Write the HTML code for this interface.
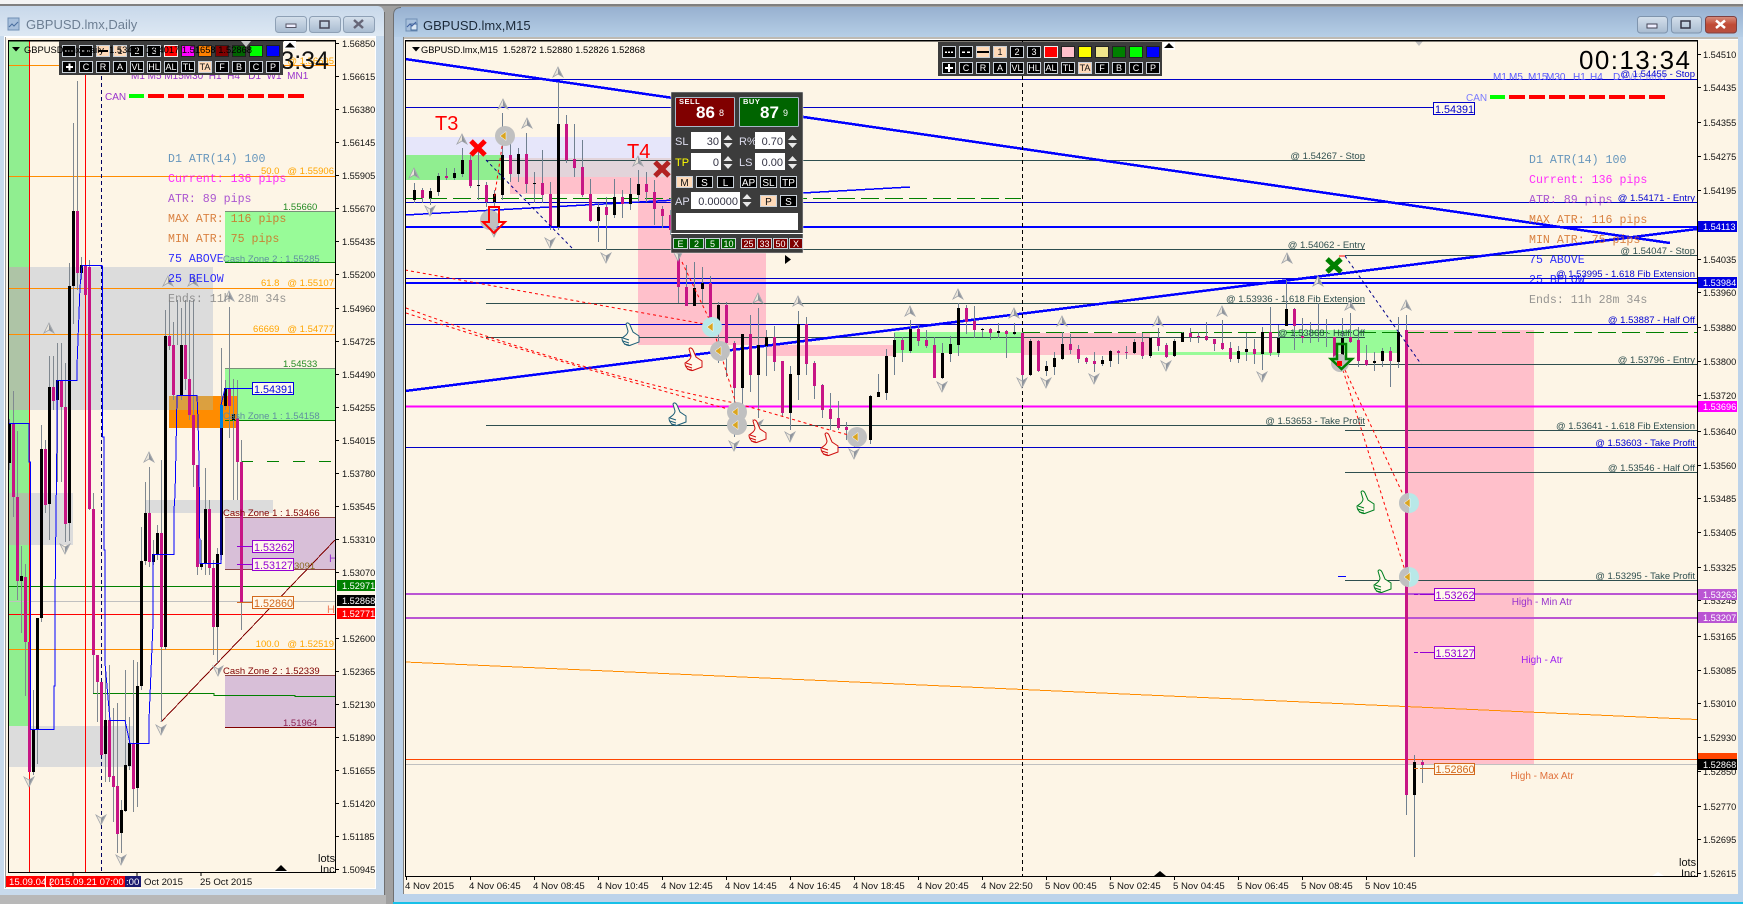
<!DOCTYPE html>
<html><head><meta charset="utf-8"><title>GBPUSD</title>
<style>
html,body{margin:0;padding:0;background:#f0f0f0;overflow:hidden}
svg{display:block}
text{font-family:"Liberation Sans",sans-serif;white-space:pre}
.c{shape-rendering:crispEdges}
.ax{font-size:9.2px;fill:#111}
.tg{font-size:9.2px;fill:#fff}
.l{font-size:9.5px;text-anchor:end}
.sl{fill:#2f4f4f}.bl{fill:#0000d0}
.x{font-size:9.6px;fill:#111}
.m{font-family:"Liberation Mono",monospace;font-size:11.6px;opacity:.82}
.b{fill:#000;stroke:#c8d0d8}
.p{fill:#ffdab9;stroke:#c8d0d8}
.t{font-size:9px;fill:#fff;text-anchor:middle}
.td{font-size:9px;fill:#111;text-anchor:middle}
.pl{font-size:11px;fill:#dde}
.in{fill:#fff}
.iv{font-size:11px;fill:#334;text-anchor:end}
.sp{fill:#e8e8e8}
.box{font-size:10.8px}
.tf{font-size:10px}
</style></head>
<body>
<svg xmlns="http://www.w3.org/2000/svg" width="1743" height="904" viewBox="0 0 1743 904">
<defs>
<linearGradient id="g1" x1="0" y1="0" x2="0" y2="1"><stop offset="0" stop-color="#c8d8ea"/><stop offset="1" stop-color="#dde8f3"/></linearGradient>
<linearGradient id="g2" x1="0" y1="0" x2="0" y2="1"><stop offset="0" stop-color="#97b0d0"/><stop offset="1" stop-color="#b6cee6"/></linearGradient>
<linearGradient id="gb" x1="0" y1="0" x2="0" y2="1"><stop offset="0" stop-color="#d5e0ec"/><stop offset="1" stop-color="#a8bbd0"/></linearGradient>
<linearGradient id="gr" x1="0" y1="0" x2="0" y2="1"><stop offset="0" stop-color="#d89080"/><stop offset=".5" stop-color="#c04a35"/><stop offset="1" stop-color="#b85040"/></linearGradient>
<g id="fu"><path d="M0-5L5 5 0 2-5 5Z" fill="#ece6da" stroke="#a0a4aa" stroke-width=".8"/><path d="M0-4L4 4 0 2Z" fill="#8e949c"/></g>
<g id="fd"><path d="M0 5L5-5 0-2-5-5Z" fill="#ece6da" stroke="#a0a4aa" stroke-width=".8"/><path d="M0 4L4-4 0-2Z" fill="#8e949c"/></g>
<path id="tri" d="M-5 0L1-4.500V4.500Z" fill="#daa520" stroke="#fff" stroke-width=".5"/>
<g id="th" fill="#fff8ea" stroke-width="1"><path d="M-8 3C-5 1-2-1-2-4L-4-11C-3-13-1-12 0-10L3-3 9 1V7L1 10C-3 12-8 8-8 3Z"/><path d="M-7 3L-1 5M-7 6L-1 8M-6 9L-1 10" fill="none"/></g>
</defs>

<!-- desktop -->
<rect width="1743" height="904" fill="#a0a0a0"/>
<rect width="1743" height="4" fill="#f4f4f4"/>
<rect y="4" width="1743" height="2" fill="#808080"/>

<!-- LEFT WINDOW -->
<path d="M0 6H376Q384 6 384 14V895H0Z" fill="#c8daec"/>
<path d="M0 6H376Q384 6 384 14V36H0Z" fill="url(#g1)"/>
<path d="M384.500 12V895" stroke="#707070"/>
<rect y="895" width="386" height="9" fill="#b8b8b8"/>
<rect x="4" y="36" width="372" height="853" fill="#fff"/>
<rect x="6" y="38" width="369" height="850" fill="#fdf5e6"/>
<path d="M5.500 37V888" stroke="#999"/>
<g fill="#a8c0dc" stroke="#6f8fb5"><rect x="8" y="18" width="11" height="12"/></g>
<path d="M9 27l3-3 2 2 4-4" stroke="#4a6f9f" fill="none"/>
<text x="26" y="29" font-size="13" fill="#6d7f93">GBPUSD.lmx,Daily</text>
<g stroke="#8ea0b5" fill="url(#gb)"><rect x="275.500" y="16.500" width="31" height="16" rx="3"/><rect x="309.500" y="16.500" width="31" height="16" rx="3"/><rect x="343.500" y="16.500" width="31" height="16" rx="3"/></g>
<rect x="286" y="24" width="10" height="3.500" fill="#eef" stroke="#556"/>
<rect x="320" y="21" width="9" height="7" fill="none" stroke="#445" stroke-width="1.500"/>
<path d="M354 20l9 8M363 20l-9 8" stroke="#667" stroke-width="2.500"/>

<!-- left chart rects -->
<g class="c">
<rect x="9" y="41" width="21" height="689" fill="#90ee90"/>
<rect x="9" y="267" width="204" height="143" fill="#dcdcdc"/>
<rect x="9" y="267" width="21" height="143" fill="#aec4a6"/>
<rect x="9" y="493" width="64" height="52" fill="#dcdcdc"/>
<rect x="9" y="493" width="21" height="52" fill="#aec4a6"/>
<rect x="145" y="500" width="128" height="13" fill="#dcdcdc"/>
<rect x="9" y="726" width="124" height="41" fill="#dcdcdc"/>
<rect x="225" y="211" width="110" height="52" fill="#98fb98"/>
<rect x="225" y="368" width="110" height="52" fill="#98fb98"/>
<rect x="225" y="517" width="110" height="52" fill="#d8bfd8"/>
<rect x="225" y="675" width="110" height="52" fill="#d8bfd8"/>
<rect x="169" y="396" width="68" height="32" fill="#ff8c00"/>
<rect x="169" y="396" width="44" height="14" fill="#dba040"/>
<path d="M225 211.500H335M225 368.500H335" stroke="#789078"/>
<path d="M225 262.500H335M225 420.500H335" stroke="#008000"/>
<path d="M225 517.500H335M225 569.500H335M225 675.500H335" stroke="#8b4444"/>
<path d="M225 727.500H335" stroke="#800000"/>
<path d="M9 65.500H335M9 176.500H335M9 288.500H335M9 334.500H335M9 649.500H335" stroke="#ff8c00"/>
<path d="M9 586.500H335M93 693.500H214V695.500H295V696.500H335" stroke="#008000" fill="none"/>
<path d="M241 461.500H332" stroke="#008000" stroke-dasharray="12 14"/>
<path d="M9 601.500H335" stroke="#c0c0c0"/>
<path d="M9 614.500H335" stroke="#f00"/>
<path d="M29.500 41V872M85.500 75V872" stroke="#f00"/>
<path d="M101.500 41V872" stroke="#000060" stroke-dasharray="4 3"/>
<path d="M161 722L335 540" stroke="#800000" fill="none"/>
</g>
<!-- left candles -->
<g class="c" fill="none">
<path stroke="#808890" d="M9.500 419V470M13.500 391V517M17.500 431V600M21.500 546V633M25.500 564V696M29.500 642V772M33.500 690V775M37.500 618V764M41.500 425V622M45.500 440V513M49.500 356V540M53.500 356V410M57.500 343V482M61.500 343V482M65.500 363V542M69.500 263V541M73.500 123V324M77.500 81V290M81.500 257V280M89.500 260V510M93.500 493V693M97.500 655V722M101.500 682V755M105.500 667V782M109.500 665V782M113.500 708V822M117.500 703V853M121.500 800V853M125.500 670V812M129.500 717V770M133.500 660V812M137.500 662V807M141.500 527V690M145.500 482V565M149.500 467V567M153.500 540V565M157.500 525V560M161.500 460V722M165.500 310V650M169.500 300V350M173.500 322V400M177.500 300V345M181.500 308V400M185.500 300V390M189.500 300V420M193.500 300V487M197.500 465V575M201.500 540V570M205.500 468V575M209.500 500V575M213.500 560V655M217.500 548V663M221.500 348V560M225.500 380V410M229.500 307V438M233.500 379V500M237.500 380V500M241.500 440V630"/>
<path stroke="#c71585" stroke-width="3" d="M13.500 423V497M17.500 497V581M25.500 577V642M29.500 642V772M45.500 449V505M53.500 387V401M61.500 380V407M65.500 407V524M77.500 211V273M85.500 265V295M89.500 267V509M93.500 509V655M97.500 655V682M101.500 682V755M109.500 720V777M113.500 776V787M117.500 786V834M133.500 743V789M149.500 513V562M161.500 533V647M169.500 336V346M173.500 345V395M185.500 345V379M189.500 379V415M193.500 415V465M197.500 465V567M209.500 509V568M213.500 568V627M229.500 388V406M237.500 418V462M241.500 462V602"/>
<path stroke="#000" stroke-width="3" d="M9.500 423V463M21.500 576V581M33.500 729V772M37.500 618V729M41.500 449V618M49.500 387V504M57.500 380V400M69.500 286V523M73.500 211V286M81.500 265V273M105.500 720V754M121.500 810V833M125.500 765V811M129.500 743V766M137.500 686V788M141.500 561V686M145.500 513V561M153.500 554V562M157.500 533V554M165.500 336V647M181.500 345V395M201.500 563V567M205.500 509V563M217.500 554V627M221.500 405V555M225.500 388V406M233.500 414V420"/>
<path stroke="#0000ff" d="M9 423.500H29V462H30.500V729.500H54V686H55V600L57 433V380.500H77V366L80 287 82 265.500H101V266H102.500V437H104V550H105V663L110 720.500H125L130 743.500H149V720L153 623V554.500H174V510L175 495 176 450 177 395.500H197L198 420 199 460 200 563.500H221V405L225 388.500H250"/>
<path stroke="#0080e0" stroke-width="3" d="M221.500 405V428"/>
</g>
<g>
<use href="#fu" x="49" y="328"/><use href="#fu" x="149" y="457"/>
<use href="#fu" x="168" y="281"/><use href="#fu" x="193" y="281"/><use href="#fu" x="229" y="296"/>
<use href="#fd" x="65" y="549"/><use href="#fd" x="29" y="782"/><use href="#fd" x="101" y="820"/><use href="#fd" x="121" y="860"/><use href="#fd" x="161" y="730"/><use href="#fd" x="218" y="671"/>
</g>
<!-- left labels -->
<text x="131" y="79" class="tf" fill="#9932cc">M1 M5 M15M30  H1  H4   D1  W1  MN1</text>
<text x="105" y="100" font-size="10" fill="#9932cc">CAN</text>
<g class="c"><rect x="129" y="94" width="15" height="4" fill="#0f0"/><path d="M148 96H164M168 96H184M188 96H204M208 96H224M228 96H244M248 96H264M268 96H284M288 96H304" stroke="#f00" stroke-width="4"/></g>
<text x="168" y="162" class="m" fill="#4682b4">D1 ATR(14) 100</text>
<text x="168" y="182" class="m" fill="#ff00ff">Current: 136 pips</text>
<text x="168" y="202" class="m" fill="#9932cc">ATR: 89 pips</text>
<text x="168" y="222" class="m" fill="#d2691e">MAX ATR: 116 pips</text>
<text x="168" y="242" class="m" fill="#d2691e">MIN ATR: 75 pips</text>
<text x="168" y="262" class="m" fill="#0000ff">75 ABOVE</text>
<text x="168" y="282" class="m" fill="#0000ff">25 BELOW</text>
<text x="168" y="302" class="m" fill="#808080">Ends: 11h 28m 34s</text>
<g class="l" fill="#ffa500">
<text x="334" y="64">@ 1.56695</text>
<text x="334" y="174">50.0   @ 1.55906</text>
<text x="334" y="286">61.8   @ 1.55107</text>
<text x="334" y="332">66669   @ 1.54777</text>
<text x="334" y="647">100.0   @ 1.52519</text>
</g>
<g font-size="9.500">
<text x="283" y="210" fill="#228b22">1.55660</text>
<text x="283" y="367" fill="#228b22">1.54533</text>
<text x="223" y="262" fill="#5f8f9f">Cash Zone 2 : 1.55285</text>
<text x="223" y="419" fill="#5f8f9f">Cash Zone 1 : 1.54158</text>
<text x="223" y="516" fill="#800000">Cash Zone 1 : 1.53466</text>
<text x="223" y="674" fill="#800000">Cash Zone 2 : 1.52339</text>
<text x="283" y="726" fill="#8b2252">1.51964</text>
<text x="294" y="569" fill="#8b6b22">3091</text>
</g>
<text x="329" y="562" font-size="11" fill="#9932cc">H</text>
<text x="327" y="613" font-size="11" fill="#f08060">H</text>
<g class="c" fill="#fff8ea">
<path d="M237 388.500H253" stroke="#00f"/><path d="M237 546.500H253M237 564.500H253" stroke="#9400d3"/><path d="M237 602.500H253" stroke="#d2691e"/>
<rect x="252.500" y="382.500" width="41" height="12" stroke="#0000e0"/>
<rect x="252.500" y="540.500" width="41" height="12" stroke="#9400d3"/>
<rect x="252.500" y="558.500" width="41" height="12" stroke="#9400d3"/>
<rect x="252.500" y="596.500" width="41" height="12" stroke="#d2691e"/>
</g>
<text x="254" y="393" class="box" fill="#0000e0">1.54391</text>
<text x="254" y="551" class="box" fill="#9400d3">1.53262</text>
<text x="254" y="569" class="box" fill="#9400d3">1.53127</text>
<text x="254" y="607" class="box" fill="#d2691e">1.52860</text>
<text x="318" y="862" font-size="11" fill="#111">lots</text><text x="320" y="873" font-size="11" fill="#111">Inc</text>
<path d="M275 871l6-6 6 6Z" fill="#000"/><rect x="276" y="871" width="12" height="1" fill="#fff"/>

<!-- left clock, axis and frame -->
<text x="329" y="69" font-size="25" text-anchor="end" fill="#111">00:13:34</text>
<path class="c" d="M8.500 41V872.500H335.500V41ZM8 40.500H336" fill="none" stroke="#000"/>
<rect x="336" y="38" width="39" height="3" fill="#fdf5e6"/>
<path class="c" stroke="#000" d="M336 43.500h3M336 76.500h3M336 109.500h3M336 142.500h3M336 175.500h3M336 208.500h3M336 241.500h3M336 274.500h3M336 308.500h3M336 341.500h3M336 374.500h3M336 407.500h3M336 440.500h3M336 473.500h3M336 506.500h3M336 539.500h3M336 572.500h3M336 638.500h3M336 671.500h3M336 704.500h3M336 737.500h3M336 770.500h3M336 803.500h3M336 836.500h3M336 869.500h3M73 873v3M137 873v3M201 873v3"/>
<g class="ax">
<text x="342" y="47">1.56850</text><text x="342" y="80">1.56615</text><text x="342" y="113">1.56380</text><text x="342" y="146">1.56145</text><text x="342" y="179">1.55905</text><text x="342" y="212">1.55670</text><text x="342" y="245">1.55435</text><text x="342" y="278">1.55200</text><text x="342" y="312">1.54960</text><text x="342" y="345">1.54725</text><text x="342" y="378">1.54490</text><text x="342" y="411">1.54255</text><text x="342" y="444">1.54015</text><text x="342" y="477">1.53780</text><text x="342" y="510">1.53545</text><text x="342" y="543">1.53310</text><text x="342" y="576">1.53070</text><text x="342" y="642">1.52600</text><text x="342" y="675">1.52365</text><text x="342" y="708">1.52130</text><text x="342" y="741">1.51890</text><text x="342" y="774">1.51655</text><text x="342" y="807">1.51420</text><text x="342" y="840">1.51185</text><text x="342" y="873">1.50945</text>
</g>
<g class="c"><rect x="337" y="580" width="38" height="11" fill="#008000"/><rect x="337" y="595" width="38" height="11" fill="#000"/><rect x="337" y="608" width="38" height="11" fill="#f00"/></g>
<text x="342" y="589" class="tg">1.52971</text><text x="342" y="604" class="tg">1.52868</text><text x="342" y="617" class="tg">1.52771</text>
<rect x="6" y="876" width="39" height="11" fill="#f00"/><rect x="46" y="876" width="79" height="11" fill="#f00"/><rect x="125" y="876" width="16" height="11" fill="#1a1a70"/>
<text x="9" y="885" font-size="9.600" fill="#fff">15.09.04 (</text><text x="49" y="885" font-size="9.600" fill="#fff">2015.09.21 07:00</text><text x="126" y="885" font-size="9.600" fill="#fff">:00</text>
<text x="144" y="885" class="x">Oct 2015</text><text x="200" y="885" class="x">25 Oct 2015</text>

<!-- left toolbar -->
<g transform="translate(58,41)">
<rect x="1" width="224" height="34" fill="#3c3c3c"/>
<g class="c">
<rect x="4.500" y="4.500" width="13" height="11" class="b"/><rect x="21.500" y="4.500" width="13" height="11" class="b"/><rect x="38.500" y="4.500" width="13" height="11" class="p"/><rect x="55.500" y="4.500" width="13" height="11" class="p"/><rect x="72.500" y="4.500" width="13" height="11" class="b"/><rect x="89.500" y="4.500" width="13" height="11" class="b"/>
<rect x="106.500" y="4.500" width="13" height="11" fill="#f00" stroke="#eee"/><rect x="123.500" y="4.500" width="13" height="11" fill="#f0f" stroke="#222"/><rect x="140.500" y="4.500" width="13" height="11" fill="#ff8000" stroke="#222"/><rect x="157.500" y="4.500" width="13" height="11" fill="#800000" stroke="#222"/><rect x="174.500" y="4.500" width="13" height="11" fill="#006400" stroke="#222"/><rect x="191.500" y="4.500" width="13" height="11" fill="#0f0" stroke="#222"/><rect x="208.500" y="4.500" width="13" height="11" fill="#00f" stroke="#222"/>
<rect x="4.500" y="20.500" width="13" height="11" class="b"/><rect x="21.500" y="20.500" width="13" height="11" class="b"/><rect x="38.500" y="20.500" width="13" height="11" class="b"/><rect x="55.500" y="20.500" width="13" height="11" class="b"/><rect x="72.500" y="20.500" width="13" height="11" class="b"/><rect x="89.500" y="20.500" width="13" height="11" class="b"/><rect x="106.500" y="20.500" width="13" height="11" class="b"/><rect x="123.500" y="20.500" width="13" height="11" class="b"/><rect x="140.500" y="20.500" width="13" height="11" class="p"/><rect x="157.500" y="20.500" width="13" height="11" class="b"/><rect x="174.500" y="20.500" width="13" height="11" class="b"/><rect x="191.500" y="20.500" width="13" height="11" class="b"/><rect x="208.500" y="20.500" width="13" height="11" class="b"/>
<path d="M7 10h2M10 10h2M13 10h2M24 10h3M29 10h3M40 10h10" stroke="#fff"/>
<path d="M40 10h10" stroke="#000" stroke-width="2"/>
<path d="M8 26h7M11.500 22.500v7" stroke="#fff" stroke-width="2"/>
</g>
<text x="62" y="13" class="td">1</text><text x="79" y="13" class="t">2</text><text x="96" y="13" class="t">3</text>
<text x="28" y="29" class="t">C</text><text x="45" y="29" class="t">R</text><text x="62" y="29" class="t">A</text><text x="79" y="29" class="t">VL</text><text x="96" y="29" class="t">HL</text><text x="113" y="29" class="t">AL</text><text x="130" y="29" class="t">TL</text><text x="147" y="29" class="td">TA</text><text x="164" y="29" class="t">F</text><text x="181" y="29" class="t">B</text><text x="198" y="29" class="t">C</text><text x="215" y="29" class="t">P</text>
</g>
<path d="M12 47h8l-4 4.500Z" fill="#000"/>
<text x="24" y="53" font-size="9.600" fill="#000" textLength="228" lengthAdjust="spacingAndGlyphs">GBPUSD.lmx,Daily  1.53483 1.54017 1.51658 1.52868</text>
<rect x="284" y="41" width="12" height="8" fill="#fff"/><path d="M285 47.500l5-5 5 5Z" fill="#000"/>
<path d="M241 41l5 6 5-6Z" fill="#c4c4c4"/>

<!-- RIGHT WINDOW -->
<path d="M393 904V15Q393 7 401 7H1743V904Z" fill="#bdd3ea"/>
<path d="M393 37V15Q393 7 401 7H1743V37Z" fill="url(#g2)"/>
<path d="M393.500 904V15Q393.500 7.500 401 7.500" fill="none" stroke="#707070"/>
<rect x="393" y="902" width="1350" height="2" fill="#18c0e8"/>
<rect x="403" y="37" width="1335" height="857" fill="#fdf5e6"/>
<path class="c" d="M403.500 37V894M403 38H1738" stroke="#808080"/>
<rect x="405" y="39" width="1333" height="1" fill="#fff"/>
<g fill="#a8c0dc" stroke="#6f8fb5"><rect x="406" y="19" width="11" height="12"/></g>
<rect x="411" y="24" width="6" height="6" fill="#dce8f4" stroke="#4a6f9f"/>
<path d="M407 27l3-3 2 2 4-4" stroke="#3f5f9f" fill="none"/>
<text x="423" y="30" font-size="13" fill="#1c2a3a">GBPUSD.lmx,M15</text>
<g stroke="#7f94ad" fill="url(#gb)"><rect x="1637.500" y="16.500" width="30" height="16.500" rx="3"/><rect x="1671.500" y="16.500" width="30" height="16.500" rx="3"/></g>
<rect x="1705.500" y="16.500" width="31" height="16.500" rx="3" fill="url(#gr)" stroke="#804040"/>
<rect x="1647" y="24" width="10" height="4" fill="#eef" stroke="#445"/>
<rect x="1681" y="21" width="9" height="7" fill="none" stroke="#334" stroke-width="1.500"/>
<path d="M1716 20.500l9 7.500M1725 20.500l-9 7.500" stroke="#fff" stroke-width="2.500"/>

<!-- main rects -->
<g class="c">
<rect x="405" y="137" width="266" height="21" fill="#e6e6fa"/>
<rect x="405" y="155" width="96" height="25" fill="#90ee90"/>
<rect x="510" y="158" width="161" height="19" fill="#e2d4da"/>
<rect x="510" y="177" width="161" height="17" fill="#ffc0cb"/>
<rect x="638" y="194" width="128" height="151" fill="#ffc0cb"/>
<rect x="767" y="345" width="127" height="11" fill="#ffc0cb"/>
<rect x="894" y="332" width="128" height="21" fill="#98fb98"/>
<rect x="1022" y="333" width="128" height="22" fill="#ffc0cb"/>
<rect x="1150" y="352" width="130" height="3" fill="#98fb98"/>
<rect x="1279" y="330" width="118" height="23" fill="#98fb98"/>
<rect x="1407" y="330" width="127" height="434" fill="#ffc0cb"/>
</g>
<!-- main lines -->
<g class="c" fill="none">
<path stroke="#0000c8" d="M405 79.500H1697M405 107.500H1423M405 202.500H1697M405 278.500H1697M405 324.500H1697M405 447.500H1697"/>
<path stroke="#2f4f4f" d="M486 160.500H1365M486 249.500H1365M1345 255.500H1697M486 303.500H1365M486 337.500H1365M1345 364.500H1697M486 425.500H1365M1345 430.500H1697M1345 472.500H1697M1345 580.500H1697"/>
<path stroke="#00f" stroke-width="2" d="M405 227H1697M405 283H1697"/>
<path stroke="#008000" d="M405 198.500H1021" stroke-dasharray="18 6"/>
<path stroke="#008000" d="M1022 332.500H1697" stroke-dasharray="18 6"/>
<path stroke="#f0f" stroke-width="2" d="M405 406.500H1697"/>
<path stroke="#ba55d3" stroke-width="2" d="M405 594H1697M405 618H1697"/>
<path stroke="#ff8c00" d="M405 662L1697 719.500"/>
<path stroke="#c0c0c0" d="M405 764.500H1697"/>
<path stroke="#ff4500" d="M405 759.500H1697"/>
<path stroke="#00f" stroke-width="2.500" d="M405 59L1670 243"/>
<path stroke="#00f" stroke-width="2.500" d="M405 391L1697 229"/>
<path stroke="#00f" stroke-width="1.500" d="M405 215L910 187"/>
<path stroke="#00f" d="M1338 576.500h8"/>
<path stroke="#000" d="M1022.500 41V876" stroke-dasharray="4 3"/>
</g>
<!-- main candles -->
<g class="c" fill="none">
<path stroke="#708090" d="M414.500 183V203M422.500 188V203M430.500 188V205M438.500 173V196M446.500 168V180M454.500 168V180M462.500 148V177M470.500 155V188M478.500 148V200M486.500 182V207M494.500 190V208M502.500 113V200M510.500 143V182M518.500 148V182M526.500 133V193M534.500 172V203M542.500 150V203M550.500 182V230M558.500 82V230M566.500 115V163M574.500 124V177M582.500 140V197M590.500 179V222M598.500 203V242M606.500 197V250M614.500 179V218M622.500 190V218M630.500 178V210M638.500 170V202M646.500 172V202M654.500 180V225M662.500 206V228M670.500 210V235M678.500 250V303M686.500 265V306M694.500 262V306M702.500 267V303M710.500 276V325M718.500 302V363M726.500 302V377M734.500 341V437M742.500 334V405M750.500 315V392M758.500 308V418M766.500 330V376M774.500 326V371M782.500 361V417M790.500 366V430M798.500 311V400M806.500 317V375M814.500 361V399M822.500 384V418M830.500 393V430M838.500 401V430M846.500 422V440M854.500 429V447M862.500 433V443M870.500 395V444M878.500 374V397M886.500 349V400M894.500 333V375M902.500 337V362M910.500 320V353M918.500 325V346M926.500 330V348M934.500 337V378M942.500 343V379M950.500 336V362M958.500 303V356M966.500 305V334M974.500 306V338M982.500 328V337M990.500 328V340M998.500 323V338M1006.500 330V358M1014.500 323V335M1022.500 332V387M1030.500 339V376M1038.500 340V372M1046.500 361V376M1054.500 352V375M1062.500 332V360M1070.500 334V354M1078.500 345V363M1086.500 357V364M1094.500 352V372M1102.500 356V366M1110.500 350V367M1118.500 350V364M1126.500 346V359M1134.500 339V354M1142.500 333V359M1150.500 337V358M1158.500 328V351M1166.500 343V358M1174.500 339V357M1182.500 332V342M1190.500 328V342M1198.500 332V343M1206.500 322V341M1214.500 339V351M1222.500 320V350M1230.500 342V362M1238.500 346V363M1246.500 333V361M1254.500 339V364M1262.500 327V370M1270.500 307V356M1278.500 325V357M1286.500 280V326M1294.500 308V350M1302.500 318V343M1310.500 322V343M1318.500 303V342M1326.500 319V347M1334.500 337V362M1342.500 318V365M1350.500 313V343M1358.500 327V367M1366.500 345V366M1374.500 352V371M1382.500 348V367M1390.500 347V387M1398.500 317V368M1406.500 315V815M1414.500 755V857M1422.500 760V783"/>
<path stroke="#c71585" stroke-width="3" d="M422.500 190V198M446.500 176V178M470.500 160V186M486.500 185V202M510.500 155V174M526.500 154V184M542.500 183V195M550.500 194V226M566.500 124V160M574.500 159V168M582.500 167V195M590.500 194V221M606.500 207V215M622.500 197V204M646.500 184V192M654.500 192V209M662.500 209V216M670.500 215V230M678.500 257V287M686.500 287V306M710.500 283V323M726.500 305V343M734.500 343V388M750.500 334V375M774.500 337V362M782.500 361V413M806.500 324V364M814.500 363V386M822.500 385V410M830.500 409V419M838.500 418V428M846.500 427V430M854.500 429V442M902.500 340V350M918.500 329V341M926.500 340V346M934.500 345V378M966.500 308V322M974.500 321V330M990.500 329V333M1006.500 331V334M1022.500 333V375M1038.500 341V371M1070.500 344V350M1078.500 349V359M1086.500 358V362M1094.500 361V364M1118.500 351V353M1126.500 352V353M1142.500 342V356M1158.500 338V346M1166.500 345V357M1190.500 333V337M1198.500 336V337M1206.500 336V340M1214.500 339V344M1222.500 343V349M1230.500 348V359M1254.500 349V354M1270.500 332V353M1294.500 309V326M1302.500 336V338M1334.500 337V360M1350.500 337V342M1358.500 340V361M1366.500 360V365M1390.500 351V361M1406.500 330V795M1422.500 762V765"/>
<path stroke="#000" stroke-width="3" d="M414.500 190V200M430.500 191V198M438.500 176V192M454.500 173V178M462.500 160V174M478.500 185V186M494.500 194V202M502.500 155V195M518.500 154V174M534.500 183V184M558.500 124V227M598.500 207V221M614.500 197V215M630.500 194V204M638.500 184V195M694.500 288V306M702.500 283V289M718.500 305V325M742.500 334V388M758.500 345V375M766.500 337V346M790.500 374V413M798.500 324V375M862.500 439V441M870.500 396V440M878.500 392V397M886.500 356V393M894.500 340V357M910.500 329V351M942.500 353V378M950.500 344V354M958.500 308V345M982.500 329V330M998.500 331V333M1014.500 332V334M1030.500 341V375M1046.500 366V371M1054.500 358V367M1062.500 344V359M1102.500 360V364M1110.500 351V361M1134.500 342V353M1150.500 338V356M1174.500 341V356M1182.500 333V342M1238.500 351V359M1246.500 349V352M1262.500 332V354M1278.500 338V353M1286.500 309V326M1342.500 338V363M1374.500 361V363M1382.500 351V361M1398.500 332V362M1414.500 762V795"/>
</g>
<!-- dashed diagonals -->
<g fill="none" stroke-dasharray="3 3">
<path stroke="#00008b" d="M486 160L572 248M1345 256L1421 364"/>
<path stroke="#f00" d="M405 270Q560 298 710 325"/>
<path stroke="#f00" d="M406 308C520 350 640 385 735 403 790 418 820 428 853 436"/>
<path stroke="#f00" d="M406 313C520 350 640 385 728 409"/>
<path stroke="#f00" d="M682 262L712 325 738 410"/>
<path stroke="#f00" d="M503 140L494 200"/>
<path stroke="#f00" d="M1345 370L1407 503M1343 370L1407 577"/>
</g>
<!-- markers -->
<g>
<circle cx="505" cy="136" r="10" fill="#c0c0c0"/><use href="#tri" x="505" y="136"/>
<circle cx="490" cy="220" r="10" fill="#c0c0c0"/>
<circle cx="712" cy="327" r="10" fill="#b8e8e8"/><use href="#tri" x="712" y="327"/>
<circle cx="720" cy="351" r="10" fill="#c0c0c0"/><use href="#tri" x="720" y="351"/>
<circle cx="737" cy="412" r="10" fill="#c0c0c0"/><use href="#tri" x="737" y="412"/>
<circle cx="737" cy="425" r="10" fill="#c0c0c0"/><use href="#tri" x="737" y="425"/>
<circle cx="857" cy="437" r="10" fill="#c0c0c0"/><use href="#tri" x="857" y="437"/>
<circle cx="1340" cy="363" r="9" fill="#c0c0c0"/>
<circle cx="1409" cy="503" r="10" fill="#b8e8e8"/><path d="M1409 493A10 10 0 0 0 1409 513Z" fill="#c0c0c0"/><use href="#tri" x="1409" y="503"/>
<circle cx="1409" cy="577" r="10" fill="#b8e8e8"/><path d="M1409 567A10 10 0 0 0 1409 587Z" fill="#c0c0c0"/><use href="#tri" x="1409" y="577"/>
<use href="#fu" x="558" y="72"/><use href="#fu" x="503" y="104"/><use href="#fu" x="527" y="123"/><use href="#fu" x="462" y="139"/><use href="#fu" x="414" y="173"/><use href="#fu" x="638" y="161"/><use href="#fu" x="758" y="298"/><use href="#fu" x="798" y="301"/><use href="#fu" x="958" y="294"/><use href="#fu" x="1287" y="258"/><use href="#fu" x="910" y="311"/><use href="#fu" x="1014" y="313"/><use href="#fu" x="1062" y="321"/><use href="#fu" x="1158" y="321"/><use href="#fu" x="1222" y="311"/><use href="#fu" x="1318" y="281"/><use href="#fu" x="1350" y="305"/><use href="#fu" x="1406" y="305"/>
<use href="#fd" x="430" y="211"/><use href="#fd" x="494" y="232"/><use href="#fd" x="550" y="243"/><use href="#fd" x="606" y="258"/><use href="#fd" x="734" y="446"/><use href="#fd" x="790" y="437"/><use href="#fd" x="854" y="454"/><use href="#fd" x="758" y="425"/><use href="#fd" x="942" y="387"/><use href="#fd" x="1022" y="383"/><use href="#fd" x="1046" y="383"/><use href="#fd" x="1094" y="379"/><use href="#fd" x="1166" y="366"/><use href="#fd" x="1262" y="377"/><use href="#fd" x="678" y="256"/>
<path d="M1414 40h10l-5 6Z" fill="#c0c0c0"/>
<g stroke="#1e5f78"><use href="#th" x="630" y="335"/><use href="#th" x="677" y="415"/></g>
<g stroke="#d01010"><use href="#th" x="693" y="360"/><use href="#th" x="757" y="432"/><use href="#th" x="829" y="445"/></g>
<g stroke="#008020"><use href="#th" x="1365" y="503"/><use href="#th" x="1382" y="582"/></g>
<path d="M489 207H499V222H505L494 233 483 222H489Z" fill="none" stroke="#f00" stroke-width="2"/>
<path d="M1337 344H1346V359H1352L1341.500 369 1331 359H1337Z" fill="none" stroke="#008000" stroke-width="2.500"/>
<rect x="1337" y="361" width="5" height="5" fill="#f00"/>
<path d="M471 141L485 155M485 141L471 155" stroke="#f00" stroke-width="5"/>
<path d="M655 162L669 176M669 162L655 176" stroke="#b22222" stroke-width="5"/>
<path d="M1327 259L1341 272M1341 259L1327 272" stroke="#008000" stroke-width="5"/>
<path d="M1339 256h6" stroke="#f00"/>
<text x="435" y="130" font-size="20" fill="#f00">T3</text>
<text x="627" y="158" font-size="20" fill="#f00">T4</text>
</g>

<!-- main labels -->
<g class="l">
<text x="1695" y="77" class="bl">@ 1.54455 - Stop</text>
<text x="1695" y="201" class="bl">@ 1.54171 - Entry</text>
<text x="1695" y="254" class="sl">@ 1.54047 - Stop</text>
<text x="1695" y="277" class="bl">@ 1.53995 - 1.618 Fib Extension</text>
<text x="1695" y="323" class="bl">@ 1.53887 - Half Off</text>
<text x="1695" y="363" class="sl">@ 1.53796 - Entry</text>
<text x="1695" y="429" class="sl">@ 1.53641 - 1.618 Fib Extension</text>
<text x="1695" y="446" class="bl">@ 1.53603 - Take Profit</text>
<text x="1695" y="471" class="sl">@ 1.53546 - Half Off</text>
<text x="1695" y="579" class="sl">@ 1.53295 - Take Profit</text>
<text x="1365" y="159" class="sl">@ 1.54267 - Stop</text>
<text x="1365" y="248" class="sl">@ 1.54062 - Entry</text>
<text x="1365" y="302" class="sl">@ 1.53936 - 1.618 Fib Extension</text>
<text x="1365" y="336" class="sl">@ 1.53868 - Half Off</text>
<text x="1365" y="424" class="sl">@ 1.53653 - Take Profit</text>
</g>
<g class="tf" fill="#5a5aff"><text x="1493" y="80">M1</text><text x="1509" y="80">M5</text><text x="1528" y="80">M15</text><text x="1546" y="80">M30</text><text x="1573" y="80">H1</text><text x="1590" y="80">H4</text><text x="1613" y="80">D1</text><text x="1628" y="80" opacity=".6">W1 MN1</text></g>
<text x="1466" y="101" font-size="10" fill="#7a7aff">CAN</text>
<g class="c"><rect x="1490" y="95" width="15" height="4" fill="#0f0"/><path d="M1509 97H1525M1529 97H1545M1549 97H1565M1569 97H1585M1589 97H1605M1609 97H1625M1629 97H1645M1649 97H1665" stroke="#f00" stroke-width="4"/></g>
<text x="1529" y="163" class="m" fill="#4682b4">D1 ATR(14) 100</text>
<text x="1529" y="183" class="m" fill="#ff00ff">Current: 136 pips</text>
<text x="1529" y="203" class="m" fill="#9932cc">ATR: 89 pips</text>
<text x="1529" y="223" class="m" fill="#d2691e">MAX ATR: 116 pips</text>
<text x="1529" y="243" class="m" fill="#d2691e">MIN ATR: 75 pips</text>
<text x="1529" y="263" class="m" fill="#0000ff">75 ABOVE</text>
<text x="1529" y="283" class="m" fill="#0000ff">25 BELOW</text>
<text x="1529" y="303" class="m" fill="#808080">Ends: 11h 28m 34s</text>
<text x="1690" y="69" font-size="26" text-anchor="end" fill="#000" textLength="111">00:13:34</text>
<g class="c" fill="#fff8ea">
<path d="M1423 107.500H1433" stroke="#0000c8"/>
<path d="M1414 594.500h4M1420 594.500H1434M1414 652.500h4M1420 652.500H1434" stroke="#9400d3"/>
<path d="M1414 768.500h4M1420 768.500H1434" stroke="#d2691e"/>
<rect x="1433.500" y="102.500" width="41" height="12" stroke="#0000c8"/>
<rect x="1434.500" y="588.500" width="40" height="12" stroke="#9400d3"/>
<rect x="1434.500" y="646.500" width="40" height="12" stroke="#9400d3"/>
<rect x="1434.500" y="763.500" width="40" height="11" stroke="#d2691e"/>
</g>
<text x="1435" y="113" class="box" fill="#0000c8">1.54391</text>
<text x="1435.500" y="599" class="box" fill="#9400d3">1.53262</text>
<text x="1435.500" y="657" class="box" fill="#9400d3">1.53127</text>
<text x="1435.500" y="773" class="box" fill="#d2691e">1.52860</text>
<g font-size="10" text-anchor="middle">
<text x="1542" y="605" fill="#9932cc">High - Min Atr</text>
<text x="1542" y="663" fill="#a020f0">High - Atr</text>
<text x="1542" y="779" fill="#e0703a">High - Max Atr</text>
</g>
<text x="1679" y="866" font-size="11" fill="#111">lots</text><text x="1681" y="877" font-size="11" fill="#111">Inc</text>
<path d="M1652 876l6-4 6 4Z" fill="#fff"/>
<path d="M1154 876l6-5 6 5Z" fill="#000"/>

<!-- main frame / axis -->
<path class="c" d="M405.500 41V876.500H1697.500V41ZM405 40.500H1698" fill="none" stroke="#000"/>
<path class="c" stroke="#000" d="M1698 54.500h3M1698 87.500h3M1698 122.500h3M1698 156.500h3M1698 190.500h3M1698 259.500h3M1698 292.500h3M1698 327.500h3M1698 361.500h3M1698 395.500h3M1698 431.500h3M1698 465.500h3M1698 498.500h3M1698 532.500h3M1698 567.500h3M1698 600.500h3M1698 636.500h3M1698 670.500h3M1698 703.500h3M1698 737.500h3M1698 771.500h3M1698 806.500h3M1698 839.500h3M1698 873.500h3M406.500 877v3M470.500 877v3M534.500 877v3M598.500 877v3M662.500 877v3M726.500 877v3M790.500 877v3M854.500 877v3M918.500 877v3M982.500 877v3M1046.500 877v3M1110.500 877v3M1174.500 877v3M1238.500 877v3M1302.500 877v3M1366.500 877v3"/>
<g class="ax">
<text x="1703" y="58">1.54510</text><text x="1703" y="91">1.54435</text><text x="1703" y="126">1.54355</text><text x="1703" y="160">1.54275</text><text x="1703" y="194">1.54195</text><text x="1703" y="263">1.54035</text><text x="1703" y="296">1.53960</text><text x="1703" y="331">1.53880</text><text x="1703" y="365">1.53800</text><text x="1703" y="399">1.53720</text><text x="1703" y="435">1.53640</text><text x="1703" y="469">1.53560</text><text x="1703" y="502">1.53485</text><text x="1703" y="536">1.53405</text><text x="1703" y="571">1.53325</text><text x="1703" y="604">1.53245</text><text x="1703" y="640">1.53165</text><text x="1703" y="674">1.53085</text><text x="1703" y="707">1.53010</text><text x="1703" y="741">1.52930</text><text x="1703" y="775">1.52850</text><text x="1703" y="810">1.52770</text><text x="1703" y="843">1.52695</text><text x="1703" y="877">1.52615</text>
</g>
<g class="c">
<rect x="1698" y="221" width="39" height="11" fill="#0000e0"/><rect x="1698" y="277" width="39" height="11" fill="#0000e0"/><rect x="1698" y="401" width="39" height="11" fill="#f0f"/><rect x="1698" y="589" width="39" height="11" fill="#ba55d3"/><rect x="1698" y="612" width="39" height="11" fill="#ba55d3"/><rect x="1698" y="753" width="39" height="11" fill="#ff4500"/><rect x="1698" y="759" width="39" height="11" fill="#000"/>
</g>
<text x="1703" y="230" class="tg">1.54113</text><text x="1703" y="286" class="tg">1.53984</text><text x="1703" y="410" class="tg">1.53696</text><text x="1703" y="598" class="tg">1.53263</text><text x="1703" y="621" class="tg">1.53207</text><text x="1703" y="768" class="tg">1.52868</text>
<g class="x">
<text x="405" y="889">4 Nov 2015</text><text x="469" y="889">4 Nov 06:45</text><text x="533" y="889">4 Nov 08:45</text><text x="597" y="889">4 Nov 10:45</text><text x="661" y="889">4 Nov 12:45</text><text x="725" y="889">4 Nov 14:45</text><text x="789" y="889">4 Nov 16:45</text><text x="853" y="889">4 Nov 18:45</text><text x="917" y="889">4 Nov 20:45</text><text x="981" y="889">4 Nov 22:50</text><text x="1045" y="889">5 Nov 00:45</text><text x="1109" y="889">5 Nov 02:45</text><text x="1173" y="889">5 Nov 04:45</text><text x="1237" y="889">5 Nov 06:45</text><text x="1301" y="889">5 Nov 08:45</text><text x="1365" y="889">5 Nov 10:45</text>
</g>
<path d="M412 47h8l-4 4.500Z" fill="#000"/>
<text x="421" y="53" font-size="9.600" fill="#000" textLength="224" lengthAdjust="spacingAndGlyphs">GBPUSD.lmx,M15  1.52872 1.52880 1.52826 1.52868</text>

<!-- main toolbar -->
<g transform="translate(938,42)">
<rect width="224" height="34" fill="#3c3c3c"/>
<g class="c">
<rect x="4.500" y="4.500" width="13" height="11" class="b"/><rect x="21.500" y="4.500" width="13" height="11" class="b"/><rect x="38.500" y="4.500" width="13" height="11" class="p"/><rect x="55.500" y="4.500" width="13" height="11" class="p"/><rect x="72.500" y="4.500" width="13" height="11" class="b"/><rect x="89.500" y="4.500" width="13" height="11" class="b"/>
<rect x="106.500" y="4.500" width="13" height="11" fill="#f00" stroke="#eee"/><rect x="123.500" y="4.500" width="13" height="11" fill="#ffc0cb" stroke="#222"/><rect x="140.500" y="4.500" width="13" height="11" fill="#ff0" stroke="#222"/><rect x="157.500" y="4.500" width="13" height="11" fill="#f0e68c" stroke="#222"/><rect x="174.500" y="4.500" width="13" height="11" fill="#008000" stroke="#222"/><rect x="191.500" y="4.500" width="13" height="11" fill="#0f0" stroke="#222"/><rect x="208.500" y="4.500" width="13" height="11" fill="#00f" stroke="#222"/>
<rect x="4.500" y="20.500" width="13" height="11" class="b"/><rect x="21.500" y="20.500" width="13" height="11" class="b"/><rect x="38.500" y="20.500" width="13" height="11" class="b"/><rect x="55.500" y="20.500" width="13" height="11" class="b"/><rect x="72.500" y="20.500" width="13" height="11" class="b"/><rect x="89.500" y="20.500" width="13" height="11" class="b"/><rect x="106.500" y="20.500" width="13" height="11" class="b"/><rect x="123.500" y="20.500" width="13" height="11" class="b"/><rect x="140.500" y="20.500" width="13" height="11" class="p"/><rect x="157.500" y="20.500" width="13" height="11" class="b"/><rect x="174.500" y="20.500" width="13" height="11" class="b"/><rect x="191.500" y="20.500" width="13" height="11" class="b"/><rect x="208.500" y="20.500" width="13" height="11" class="b"/>
<path d="M7 10h2M10 10h2M13 10h2M24 10h3M29 10h3" stroke="#fff" stroke-width="1.500"/>
<path d="M39 10h12" stroke="#000" stroke-width="2"/>
<path d="M7 26h8M11 22v8" stroke="#fff" stroke-width="2"/>
</g>
<text x="62" y="13" class="td">1</text><text x="79" y="13" class="t">2</text><text x="96" y="13" class="t">3</text>
<text x="28" y="29" class="t">C</text><text x="45" y="29" class="t">R</text><text x="62" y="29" class="t">A</text><text x="79" y="29" class="t">VL</text><text x="96" y="29" class="t">HL</text><text x="113" y="29" class="t">AL</text><text x="130" y="29" class="t">TL</text><text x="147" y="29" class="td">TA</text><text x="164" y="29" class="t">F</text><text x="181" y="29" class="t">B</text><text x="198" y="29" class="t">C</text><text x="215" y="29" class="t">P</text>
</g>
<rect x="1163" y="42" width="12" height="8" fill="#fff"/><path d="M1164 48l5-5 5 5Z" fill="#000"/>

<!-- trade panel -->
<g>
<rect x="671" y="92" width="132" height="161" fill="#3c3c3c" stroke="#eee" stroke-width=".5"/>
<rect x="671" y="233" width="132" height="1" fill="#fff"/>
<rect x="675.500" y="97.500" width="59" height="29" rx="1" fill="#800000" stroke="#a8b8c8"/>
<rect x="739.500" y="97.500" width="59" height="29" rx="1" fill="#006400" stroke="#a8b8c8"/>
<text x="679" y="104" font-size="7.500" font-weight="bold" fill="#fff" letter-spacing=".5">SELL</text>
<text x="743" y="104" font-size="7.500" font-weight="bold" fill="#fff" letter-spacing=".5">BUY</text>
<text x="696" y="118" font-size="17" font-weight="bold" fill="#fff">86</text><text x="719" y="116" font-size="9" fill="#fff">8</text>
<text x="760" y="118" font-size="17" font-weight="bold" fill="#fff">87</text><text x="783" y="116" font-size="9" fill="#fff">9</text>
<text x="675" y="145" class="pl">SL</text><text x="739" y="145" class="pl">R%</text>
<text x="675" y="166" class="pl" style="fill:#ff0">TP</text><text x="739" y="166" class="pl">LS</text>
<text x="675" y="205" class="pl">AP</text>
<rect x="691" y="132" width="30" height="17" class="in"/><rect x="755" y="132" width="30" height="17" class="in"/>
<rect x="691" y="153" width="30" height="17" class="in"/><rect x="755" y="153" width="30" height="17" class="in"/>
<rect x="691" y="192" width="49" height="17" class="in"/>
<text x="719" y="145" class="iv">30</text><text x="783" y="145" class="iv">0.70</text>
<text x="719" y="166" class="iv">0</text><text x="783" y="166" class="iv">0.00</text>
<text x="738" y="205" class="iv">0.00000</text>
<g class="sp">
<path d="M723.500 140l4.500-5 4.500 5ZM723.500 143l4.500 5 4.500-5Z"/>
<path d="M788 140l4.500-5 4.500 5ZM788 143l4.500 5 4.500-5Z"/>
<path d="M723.500 161l4.500-5 4.500 5ZM723.500 164l4.500 5 4.500-5Z"/>
<path d="M788 161l4.500-5 4.500 5ZM788 164l4.500 5 4.500-5Z"/>
<path d="M742.500 199l4.500-5 4.500 5ZM742.500 202l4.500 5 4.500-5Z"/>
</g>
<g class="c">
<rect x="676.500" y="176.500" width="16" height="11" class="p"/><rect x="696.500" y="176.500" width="16" height="11" class="b"/><rect x="717.500" y="176.500" width="16" height="11" class="b"/><rect x="740.500" y="176.500" width="16" height="11" class="b"/><rect x="760.500" y="176.500" width="16" height="11" class="b"/><rect x="780.500" y="176.500" width="16" height="11" class="b"/>
<rect x="760.500" y="195.500" width="16" height="11" class="p"/><rect x="780.500" y="195.500" width="16" height="11" class="b"/>
<rect x="676" y="213" width="122" height="17" fill="#fff"/>
<rect x="673.500" y="238.500" width="14" height="10" fill="#006400" stroke="#c8d0d8"/><rect x="689.500" y="238.500" width="14" height="10" fill="#006400" stroke="#c8d0d8"/><rect x="705.500" y="238.500" width="14" height="10" fill="#006400" stroke="#c8d0d8"/><rect x="721.500" y="238.500" width="14" height="10" fill="#006400" stroke="#c8d0d8"/>
<rect x="741.500" y="238.500" width="14" height="10" fill="#800000" stroke="#c8d0d8"/><rect x="757.500" y="238.500" width="14" height="10" fill="#800000" stroke="#c8d0d8"/><rect x="773.500" y="238.500" width="14" height="10" fill="#800000" stroke="#c8d0d8"/><rect x="789.500" y="238.500" width="13" height="10" fill="#800000" stroke="#c8d0d8"/>
</g>
<text x="684.500" y="186" class="td" style="font-size:10px">M</text><text x="704.500" y="186" class="t" style="font-size:10px">S</text><text x="725.500" y="186" class="t" style="font-size:10px">L</text><text x="748.500" y="186" class="t" style="font-size:10px">AP</text><text x="768.500" y="186" class="t" style="font-size:10px">SL</text><text x="788.500" y="186" class="t" style="font-size:10px">TP</text>
<text x="768.500" y="205" class="td" style="font-size:10px">P</text><text x="788.500" y="205" class="t" style="font-size:10px">S</text>
<text x="680.500" y="247" class="t">E</text><text x="696.500" y="247" class="t">2</text><text x="712.500" y="247" class="t">5</text><text x="728.500" y="247" class="t">10</text><text x="748.500" y="247" class="t">25</text><text x="764.500" y="247" class="t">33</text><text x="780.500" y="247" class="t">50</text><text x="796" y="247" class="t">X</text>
<path d="M785 255l6 4.500-6 4.500Z" fill="#000"/>
</g>
</svg>
</body></html>
